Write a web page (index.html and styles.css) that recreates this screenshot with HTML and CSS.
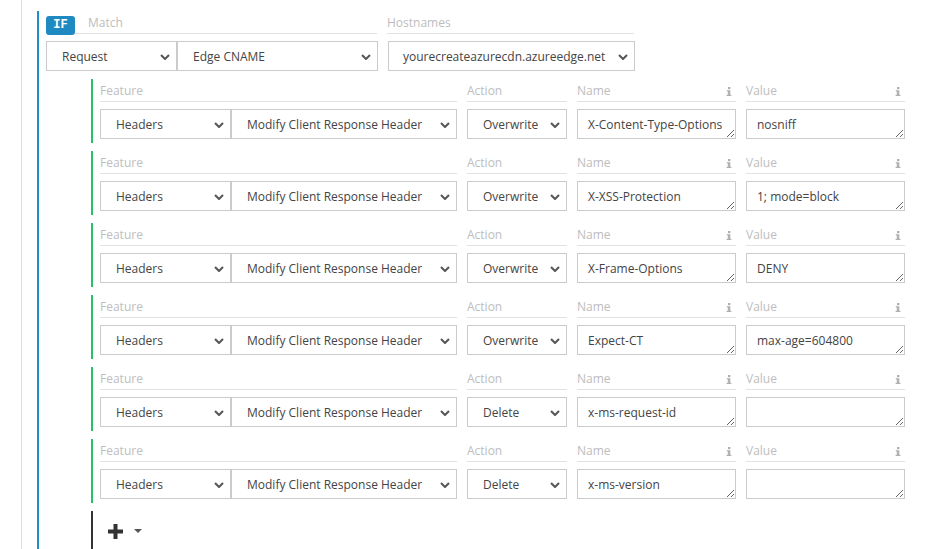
FILE: index.html
```html
<!DOCTYPE html>
<html>
<head>
<meta charset="utf-8">
<link rel="stylesheet" href="styles.css">
</head>
<body>
<div class="page">
  <div class="if-block">
    <div class="head-row">
      <div class="match-group">
        <span class="badge">IF</span>
        <div class="label match-label">Match</div>
      </div>
      <div class="label host-label">Hostnames</div>
    </div>
    <div class="sel-row">
      <div class="select w-request"><span>Request</span><svg class="chev" width="10" height="6" viewBox="0 0 10 6"><polyline points="1,1 5,5 9,1"/></svg></div>
      <div class="select w-edge"><span>Edge CNAME</span><svg class="chev" width="10" height="6" viewBox="0 0 10 6"><polyline points="1,1 5,5 9,1"/></svg></div>
      <div class="select w-host"><span>yourecreateazurecdn.azureedge.net</span><svg class="chev" width="10" height="6" viewBox="0 0 10 6"><polyline points="1,1 5,5 9,1"/></svg></div>
    </div>

    <div class="feature">
      <div class="labels">
        <div class="label c-feature">Feature</div>
        <div class="label c-action">Action</div>
        <div class="label c-name">Name<svg class="info" width="6" height="9" viewBox="0 0 6 9"><rect x="2" y="0" width="2.4" height="2.2"/><path d="M0.8 3.2H4.3V7.8H5.4V9H0.6V7.8H1.8V4.4H0.8Z"/></svg></div>
        <div class="label c-value">Value<svg class="info" width="6" height="9" viewBox="0 0 6 9"><rect x="2" y="0" width="2.4" height="2.2"/><path d="M0.8 3.2H4.3V7.8H5.4V9H0.6V7.8H1.8V4.4H0.8Z"/></svg></div>
      </div>
      <div class="fields">
        <div class="select w-headers"><span>Headers</span><svg class="chev" width="10" height="6" viewBox="0 0 10 6"><polyline points="1,1 5,5 9,1"/></svg></div>
        <div class="select w-modify"><span>Modify Client Response Header</span><svg class="chev" width="10" height="6" viewBox="0 0 10 6"><polyline points="1,1 5,5 9,1"/></svg></div>
        <div class="select w-action"><span>Overwrite</span><svg class="chev" width="10" height="6" viewBox="0 0 10 6"><polyline points="1,1 5,5 9,1"/></svg></div>
        <textarea class="ta w-name" wrap="off">X-Content-Type-Options</textarea>
        <textarea class="ta w-value" wrap="off">nosniff</textarea>
      </div>
    </div>

    <div class="feature">
      <div class="labels">
        <div class="label c-feature">Feature</div>
        <div class="label c-action">Action</div>
        <div class="label c-name">Name<svg class="info" width="6" height="9" viewBox="0 0 6 9"><rect x="2" y="0" width="2.4" height="2.2"/><path d="M0.8 3.2H4.3V7.8H5.4V9H0.6V7.8H1.8V4.4H0.8Z"/></svg></div>
        <div class="label c-value">Value<svg class="info" width="6" height="9" viewBox="0 0 6 9"><rect x="2" y="0" width="2.4" height="2.2"/><path d="M0.8 3.2H4.3V7.8H5.4V9H0.6V7.8H1.8V4.4H0.8Z"/></svg></div>
      </div>
      <div class="fields">
        <div class="select w-headers"><span>Headers</span><svg class="chev" width="10" height="6" viewBox="0 0 10 6"><polyline points="1,1 5,5 9,1"/></svg></div>
        <div class="select w-modify"><span>Modify Client Response Header</span><svg class="chev" width="10" height="6" viewBox="0 0 10 6"><polyline points="1,1 5,5 9,1"/></svg></div>
        <div class="select w-action"><span>Overwrite</span><svg class="chev" width="10" height="6" viewBox="0 0 10 6"><polyline points="1,1 5,5 9,1"/></svg></div>
        <textarea class="ta w-name" wrap="off">X-XSS-Protection</textarea>
        <textarea class="ta w-value" wrap="off">1; mode=block</textarea>
      </div>
    </div>

    <div class="feature">
      <div class="labels">
        <div class="label c-feature">Feature</div>
        <div class="label c-action">Action</div>
        <div class="label c-name">Name<svg class="info" width="6" height="9" viewBox="0 0 6 9"><rect x="2" y="0" width="2.4" height="2.2"/><path d="M0.8 3.2H4.3V7.8H5.4V9H0.6V7.8H1.8V4.4H0.8Z"/></svg></div>
        <div class="label c-value">Value<svg class="info" width="6" height="9" viewBox="0 0 6 9"><rect x="2" y="0" width="2.4" height="2.2"/><path d="M0.8 3.2H4.3V7.8H5.4V9H0.6V7.8H1.8V4.4H0.8Z"/></svg></div>
      </div>
      <div class="fields">
        <div class="select w-headers"><span>Headers</span><svg class="chev" width="10" height="6" viewBox="0 0 10 6"><polyline points="1,1 5,5 9,1"/></svg></div>
        <div class="select w-modify"><span>Modify Client Response Header</span><svg class="chev" width="10" height="6" viewBox="0 0 10 6"><polyline points="1,1 5,5 9,1"/></svg></div>
        <div class="select w-action"><span>Overwrite</span><svg class="chev" width="10" height="6" viewBox="0 0 10 6"><polyline points="1,1 5,5 9,1"/></svg></div>
        <textarea class="ta w-name" wrap="off">X-Frame-Options</textarea>
        <textarea class="ta w-value" wrap="off">DENY</textarea>
      </div>
    </div>

    <div class="feature">
      <div class="labels">
        <div class="label c-feature">Feature</div>
        <div class="label c-action">Action</div>
        <div class="label c-name">Name<svg class="info" width="6" height="9" viewBox="0 0 6 9"><rect x="2" y="0" width="2.4" height="2.2"/><path d="M0.8 3.2H4.3V7.8H5.4V9H0.6V7.8H1.8V4.4H0.8Z"/></svg></div>
        <div class="label c-value">Value<svg class="info" width="6" height="9" viewBox="0 0 6 9"><rect x="2" y="0" width="2.4" height="2.2"/><path d="M0.8 3.2H4.3V7.8H5.4V9H0.6V7.8H1.8V4.4H0.8Z"/></svg></div>
      </div>
      <div class="fields">
        <div class="select w-headers"><span>Headers</span><svg class="chev" width="10" height="6" viewBox="0 0 10 6"><polyline points="1,1 5,5 9,1"/></svg></div>
        <div class="select w-modify"><span>Modify Client Response Header</span><svg class="chev" width="10" height="6" viewBox="0 0 10 6"><polyline points="1,1 5,5 9,1"/></svg></div>
        <div class="select w-action"><span>Overwrite</span><svg class="chev" width="10" height="6" viewBox="0 0 10 6"><polyline points="1,1 5,5 9,1"/></svg></div>
        <textarea class="ta w-name" wrap="off">Expect-CT</textarea>
        <textarea class="ta w-value" wrap="off">max-age=604800</textarea>
      </div>
    </div>

    <div class="feature">
      <div class="labels">
        <div class="label c-feature">Feature</div>
        <div class="label c-action">Action</div>
        <div class="label c-name">Name<svg class="info" width="6" height="9" viewBox="0 0 6 9"><rect x="2" y="0" width="2.4" height="2.2"/><path d="M0.8 3.2H4.3V7.8H5.4V9H0.6V7.8H1.8V4.4H0.8Z"/></svg></div>
        <div class="label c-value">Value<svg class="info" width="6" height="9" viewBox="0 0 6 9"><rect x="2" y="0" width="2.4" height="2.2"/><path d="M0.8 3.2H4.3V7.8H5.4V9H0.6V7.8H1.8V4.4H0.8Z"/></svg></div>
      </div>
      <div class="fields">
        <div class="select w-headers"><span>Headers</span><svg class="chev" width="10" height="6" viewBox="0 0 10 6"><polyline points="1,1 5,5 9,1"/></svg></div>
        <div class="select w-modify"><span>Modify Client Response Header</span><svg class="chev" width="10" height="6" viewBox="0 0 10 6"><polyline points="1,1 5,5 9,1"/></svg></div>
        <div class="select w-action"><span>Delete</span><svg class="chev" width="10" height="6" viewBox="0 0 10 6"><polyline points="1,1 5,5 9,1"/></svg></div>
        <textarea class="ta w-name" wrap="off">x-ms-request-id</textarea>
        <textarea class="ta w-value" wrap="off"></textarea>
      </div>
    </div>

    <div class="feature">
      <div class="labels">
        <div class="label c-feature">Feature</div>
        <div class="label c-action">Action</div>
        <div class="label c-name">Name<svg class="info" width="6" height="9" viewBox="0 0 6 9"><rect x="2" y="0" width="2.4" height="2.2"/><path d="M0.8 3.2H4.3V7.8H5.4V9H0.6V7.8H1.8V4.4H0.8Z"/></svg></div>
        <div class="label c-value">Value<svg class="info" width="6" height="9" viewBox="0 0 6 9"><rect x="2" y="0" width="2.4" height="2.2"/><path d="M0.8 3.2H4.3V7.8H5.4V9H0.6V7.8H1.8V4.4H0.8Z"/></svg></div>
      </div>
      <div class="fields">
        <div class="select w-headers"><span>Headers</span><svg class="chev" width="10" height="6" viewBox="0 0 10 6"><polyline points="1,1 5,5 9,1"/></svg></div>
        <div class="select w-modify"><span>Modify Client Response Header</span><svg class="chev" width="10" height="6" viewBox="0 0 10 6"><polyline points="1,1 5,5 9,1"/></svg></div>
        <div class="select w-action"><span>Delete</span><svg class="chev" width="10" height="6" viewBox="0 0 10 6"><polyline points="1,1 5,5 9,1"/></svg></div>
        <textarea class="ta w-name" wrap="off">x-ms-version</textarea>
        <textarea class="ta w-value" wrap="off"></textarea>
      </div>
    </div>

    <div class="add-row">
      <svg class="plus" width="15" height="15" viewBox="0 0 15 15"><path d="M5.5 0H9.5V5.5H15V9.5H9.5V15H5.5V9.5H0V5.5H5.5Z"/></svg>
      <svg class="caret" width="8" height="4" viewBox="0 0 8 4"><path d="M0 0H8L4 4Z"/></svg>
    </div>
  </div>
</div>
</body>
</html>
```
FILE: styles.css
```css
html, body {
  margin: 0;
  padding: 0;
  background: #fff;
  overflow: hidden;
}
body {
  font-family: "Open Sans", "Noto Sans", sans-serif;
  font-size: 12px;
  color: #444;
}
.page {
  margin-left: 21px;
  border-left: 1px solid #dedede;
  height: 549px;
  padding-top: 11px;
  box-sizing: border-box;
}
.if-block {
  margin-left: 15px;
  border-left: 2px solid #1f8dc6;
  padding-left: 7px;
  height: 538px;
}
.head-row {
  display: flex;
  gap: 10px;
  height: 23px;
}
.match-group {
  display: flex;
  width: 331px;
}
.badge {
  width: 29px;
  height: 19px;
  margin-top: 5px;
  background: #1f8ac2;
  border-radius: 3px;
  color: #fff;
  font-family: "Liberation Mono", "DejaVu Sans Mono", monospace;
  font-weight: bold;
  font-size: 12px;
  line-height: 19px;
  text-align: center;
  flex: none;
}
.label {
  height: 22px;
  box-sizing: content-box;
  padding-top: 0;
  line-height: 22px;
  border-bottom: 1px solid #e2e2e2;
  color: #bdbdbd;
  font-size: 12px;
  display: flex;
  align-items: center;
  justify-content: space-between;
}
.label-text {
  display: block;
}
.labels .label,
.head-row .label {
  height: 20px;
  padding-top: 2px;
}
.match-label {
  flex: 1;
  padding-left: 13px;
}
.host-label {
  width: 247px;
}
.sel-row {
  display: flex;
  margin-top: 7px;
}
.select {
  height: 30px;
  box-sizing: border-box;
  border: 1px solid #cbcbcb;
  display: flex;
  align-items: center;
  justify-content: space-between;
  padding: 1px 6px 0 15px;
  color: #444;
  background: #fff;
  white-space: nowrap;
}
.chev {
  fill: none;
  stroke: #555;
  stroke-width: 2;
  flex: none;
}
.w-request { width: 131px; }
.w-edge { width: 201px; }
.w-host { width: 247px; margin-left: 10px; padding-left: 14px; }

.feature {
  margin-left: 45px;
  border-left: 2px solid #27c267;
  padding-left: 7px;
  padding-bottom: 4px;
  margin-top: 8px;
}
.labels {
  display: flex;
  gap: 10px;
}
.c-feature { width: 357px; }
.c-action { width: 100px; }
.c-name { width: 159px; }
.c-value { width: 159px; }
.info {
  fill: #b0b0b0;
  margin-right: 4px;
}
.fields {
  display: flex;
  margin-top: 7px;
}
.w-headers { width: 131px; }
.w-modify { width: 226px; }
.w-action { width: 100px; margin-left: 10px; }
.ta {
  height: 30px;
  box-sizing: border-box;
  border: 1px solid #cbcbcb;
  border-radius: 0;
  padding: 6px 8px 0 10px;
  font-family: "Open Sans", "Noto Sans", sans-serif;
  font-size: 12px;
  color: #444;
  line-height: 17px;
  overflow: hidden;
  resize: both;
  margin: 0 0 0 10px;
  white-space: pre;
}
.w-name { width: 159px; }
.w-value { width: 159px; }

.add-row {
  margin-left: 45px;
  border-left: 2px solid #333;
  margin-top: 8px;
  height: 40px;
  display: flex;
  align-items: center;
  padding-left: 15px;
  gap: 11px;
}
.plus {
  fill: #333;
}
.caret {
  fill: #555;
}
```
